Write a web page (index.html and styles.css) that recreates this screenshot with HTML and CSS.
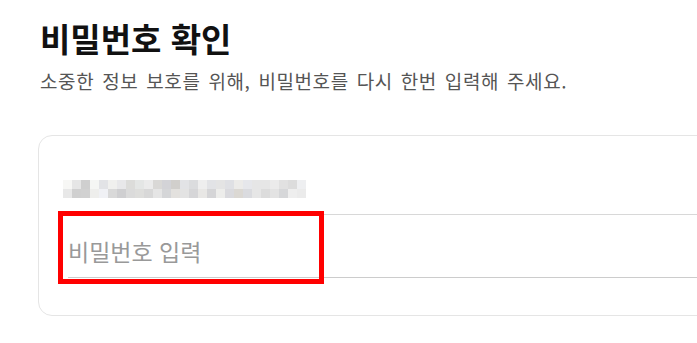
FILE: index.html
```html
<!DOCTYPE html>
<html lang="ko">
<head>
    <meta charset="UTF-8">
    <title>비밀번호 확인</title>
    <link rel="stylesheet" href="styles.css">
</head>
<body>
    <div class="page">
        <h1 class="title">비밀번호 확인</h1>
        <p class="subtitle">소중한 정보 보호를 위해, 비밀번호를 다시 한번 입력해 주세요.</p>

        <div class="card">
            <!-- 가려진 계정 정보 -->
            <div class="account">
                <div class="mosaic">
                    <span style="background:#f7f7f5"></span><span style="background:#e6e6e6"></span><span style="background:#cfcfcf"></span><span style="background:#f5f6f4"></span><span style="background:#e2e3e6"></span><span style="background:#f0f0ee"></span><span style="background:#e8e8ea"></span><span style="background:#dcdcda"></span><span style="background:#e4e6e5"></span><span style="background:#ebebeb"></span><span style="background:#d9d8d6"></span><span style="background:#d3d3d7"></span><span style="background:#d1cfcc"></span><span style="background:#e2e3e6"></span><span style="background:#dbdcde"></span><span style="background:#eeeeee"></span><span style="background:#e2e3e6"></span><span style="background:#e4e4e4"></span><span style="background:#dfe0e4"></span><span style="background:#ecebe9"></span><span style="background:#e6e7eb"></span><span style="background:#e6e6e6"></span><span style="background:#e6e6e6"></span><span style="background:#ebebeb"></span><span style="background:#e1e1e1"></span><span style="background:#dcdcdc"></span><span style="background:#eeeff1"></span>
                    <span style="background:#e8e8e8"></span><span style="background:#d0d0d0"></span><span style="background:#d1d1d1"></span><span style="background:#eeeeec"></span><span style="background:#f0f1f5"></span><span style="background:#d9d9d9"></span><span style="background:#cfcfd1"></span><span style="background:#dbdbdb"></span><span style="background:#dededc"></span><span style="background:#d8d8d8"></span><span style="background:#e5e5e5"></span><span style="background:#d5d6d8"></span><span style="background:#e3e1de"></span><span style="background:#e3e3e3"></span><span style="background:#d6d6d8"></span><span style="background:#e8e7e5"></span><span style="background:#d5d5d7"></span><span style="background:#ededeb"></span><span style="background:#dadade"></span><span style="background:#dbd8d3"></span><span style="background:#dadbdf"></span><span style="background:#e6e6e6"></span><span style="background:#dcdcdc"></span><span style="background:#e3e3e3"></span><span style="background:#d6d7d9"></span><span style="background:#eeeeee"></span><span style="background:#ebebeb"></span>
                </div>
            </div>

            <div class="field">
                <input type="password" class="password-input" placeholder="비밀번호 입력">
                <!-- 강조 표시 -->
                <div class="highlight"></div>
            </div>
        </div>
    </div>
</body>
</html>
```

FILE: styles.css
```css
html, body {
    margin: 0;
    padding: 0;
    overflow: hidden;
    background: #fff;
}
body {
    font-family: "Noto Sans CJK KR", "Noto Sans", sans-serif;
}
.page {
    width: 760px;
    padding: 18px 0 0 40px;
}
.title {
    margin: 0;
    font-size: 33px;
    line-height: 40px;
    font-weight: 700;
    color: #111;
}
.subtitle {
    margin: 10px 0 0;
    font-size: 19px;
    line-height: 26px;
    letter-spacing: 0.6px;
    word-spacing: 2px;
    color: #555;
}
.card {
    margin: 41px 0 0 -2px;
    padding: 44px 0 37px 29px;
    border: 1px solid #e5e5e5;
    border-radius: 14px;
}
.account {
    padding-bottom: 16px;
    border-bottom: 1px solid #d8d8d8;
}
.mosaic {
    display: grid;
    grid-template-columns: repeat(27, 9px);
    grid-auto-rows: 9px;
    margin-left: -5px;
}
.field {
    position: relative;
}
.password-input {
    display: block;
    width: 100%;
    height: 63px;
    box-sizing: border-box;
    padding: 10px 0 0;
    border: none;
    border-bottom: 1px solid #ccc;
    outline: none;
    font-family: "Noto Sans CJK KR", "Noto Sans", sans-serif;
    font-size: 23px;
    color: #333;
}
.password-input::placeholder {
    color: #999;
}
.highlight {
    position: absolute;
    left: -10px;
    top: -4px;
    width: 266px;
    height: 73px;
    box-sizing: border-box;
    border: 5px solid #f00;
}
```
